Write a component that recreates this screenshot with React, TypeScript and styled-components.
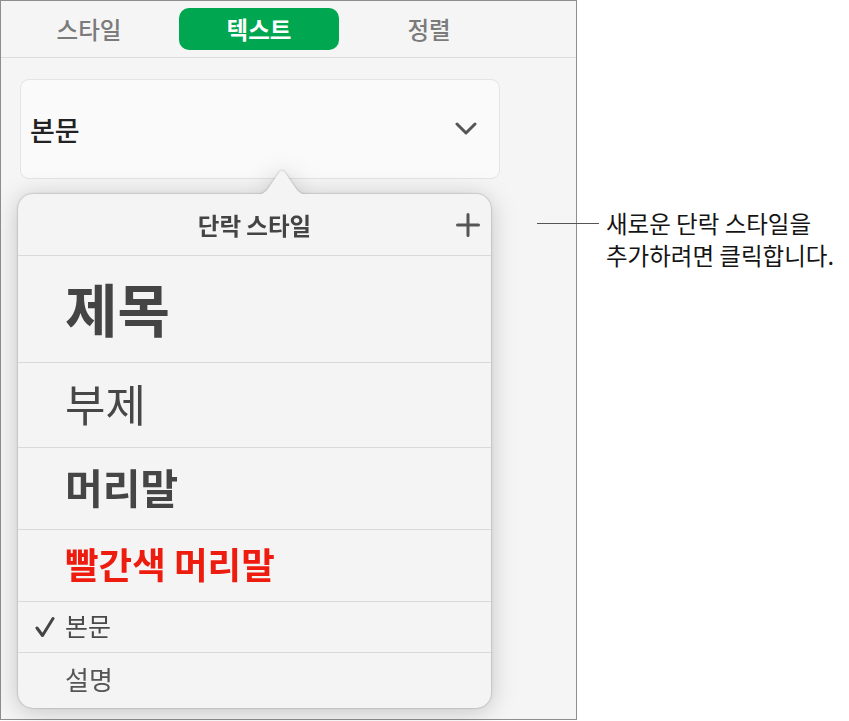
import React from 'react';
import styled, { createGlobalStyle } from 'styled-components';

const GlobalStyle = createGlobalStyle`
  html, body {
    margin: 0;
    padding: 0;
    background: #ffffff;
  }
  body {
    font-family: "Noto Sans CJK KR", "Noto Sans", sans-serif;
  }
`;

interface IStyleRow {
  label: string;
  height: number;
  size: number;
  weight: number;
  color: string;
  checked?: boolean;
}

const tabs = ['스타일', '텍스트', '정렬'];

const rows: IStyleRow[] = [
  { label: '제목', height: 107, size: 57, weight: 700, color: '#444444' },
  { label: '부제', height: 85, size: 44, weight: 400, color: '#474747' },
  { label: '머리말', height: 82, size: 41, weight: 700, color: '#454545' },
  { label: '빨간색 머리말', height: 72, size: 36.5, weight: 700, color: '#ee1c0e' },
  { label: '본문', height: 51, size: 25, weight: 400, color: '#4a4a4a', checked: true },
  { label: '설명', height: 56, size: 26, weight: 400, color: '#555555' },
];

const App: React.FC = () => (
  <>
    <GlobalStyle />
    <Page>
      <Panel>
        <TabBar>
          {tabs.map((tab) => (
            <Tab key={tab} active={tab === '텍스트'}>
              {tab}
            </Tab>
          ))}
        </TabBar>

        <StylePicker>
          <PickerText>본문</PickerText>
          <svg width="22" height="14" viewBox="0 0 22 14">
            <polyline
              points="2,2 11,11 20,2"
              fill="none"
              stroke="#555"
              strokeWidth="3"
              strokeLinecap="round"
              strokeLinejoin="round"
            />
          </svg>
        </StylePicker>

        <Popover>
          <PopoverArrow width="56" height="27" viewBox="0 0 56 27">
            <path
              d="M0 27 C7 27 10 25 13 22 L25 4.5 Q28 0.5 31 4.5 L43 22 C46 25 49 27 56 27 Z"
              fill="#f4f4f4"
            />
          </PopoverArrow>
          <Card>
            <CardHeader>
              <span />
              <HeaderTitle>단락 스타일</HeaderTitle>
              <AddButton>
                <svg width="24" height="24" viewBox="0 0 24 24">
                  <path
                    d="M12 1.5 V22.5 M1.5 12 H22.5"
                    stroke="#555"
                    strokeWidth="3"
                    strokeLinecap="round"
                  />
                </svg>
              </AddButton>
            </CardHeader>
            {rows.map((row) => (
              <StyleRow key={row.label} h={row.height}>
                <CheckSlot>
                  {row.checked && (
                    <svg width="20" height="22" viewBox="0 0 20 22">
                      <polyline
                        points="2,12 7.5,19.5 18,2.5"
                        fill="none"
                        stroke="#444"
                        strokeWidth="3"
                        strokeLinecap="round"
                        strokeLinejoin="round"
                      />
                    </svg>
                  )}
                </CheckSlot>
                <RowLabel size={row.size} weight={row.weight} color={row.color}>
                  {row.label}
                </RowLabel>
              </StyleRow>
            ))}
          </Card>
        </Popover>
      </Panel>

      <CalloutLine />
      <CalloutText>
        새로운 단락 스타일을
        <br />
        추가하려면 클릭합니다.
      </CalloutText>
    </Page>
  </>
);

const Page = styled.div`
  position: relative;
  width: 849px;
  height: 721px;
  overflow: hidden;
`;

const Panel = styled.div`
  width: 575px;
  height: 718px;
  border: 1px solid #8e8e8e;
  background: #f5f5f5;
  display: flex;
  flex-direction: column;
`;

const TabBar = styled.div`
  display: grid;
  grid-template-columns: repeat(3, 160px);
  column-gap: 10px;
  padding: 7px 8px;
  border-bottom: 1px solid #dcdcdc;
`;

const Tab = styled.div<{ active: boolean }>`
  height: 42px;
  border-radius: 10px;
  display: flex;
  align-items: center;
  justify-content: center;
  font-size: 23.5px;
  font-weight: ${({ active }) => (active ? 700 : 500)};
  color: ${({ active }) => (active ? '#ffffff' : '#7b7b7b')};
  background: ${({ active }) => (active ? '#00a650' : 'transparent')};
`;

const StylePicker = styled.div`
  margin: 21px 0 0 19px;
  width: 447px;
  height: 98px;
  border: 1px solid #e4e4e4;
  border-radius: 9px;
  background: #fafafa;
  display: flex;
  align-items: center;
  justify-content: space-between;
  padding: 0 22px 0 9px;
`;

const PickerText = styled.div`
  font-size: 27px;
  font-weight: 500;
  color: #222222;
`;

const Popover = styled.div`
  position: relative;
  margin: 15px 0 0 17px;
  width: 473px;
  filter: drop-shadow(0 0 1px rgba(0, 0, 0, 0.3)) drop-shadow(0 3px 12px rgba(0, 0, 0, 0.2));
`;

const PopoverArrow = styled.svg`
  position: absolute;
  left: 236px;
  top: -26px;
  display: block;
`;

const Card = styled.div`
  height: 514px;
  border-radius: 15px;
  background: #f4f4f4;
  overflow: hidden;
  display: flex;
  flex-direction: column;
`;

const CardHeader = styled.div`
  height: 61px;
  display: grid;
  grid-template-columns: 1fr auto 1fr;
  align-items: center;
`;

const HeaderTitle = styled.div`
  font-size: 23.5px;
  font-weight: 700;
  color: #444444;
`;

const AddButton = styled.div`
  justify-self: end;
  padding-right: 11px;
  display: flex;
  align-items: center;
`;

const StyleRow = styled.div<{ h: number }>`
  height: ${({ h }) => h - 1}px;
  border-top: 1px solid #d9d9d9;
  display: flex;
  align-items: center;
`;

const CheckSlot = styled.div`
  width: 47px;
  padding-left: 17px;
  box-sizing: border-box;
  display: flex;
  align-items: center;
`;

const RowLabel = styled.div<{ size: number; weight: number; color: string }>`
  font-size: ${({ size }) => size}px;
  font-weight: ${({ weight }) => weight};
  color: ${({ color }) => color};
  line-height: 1.2;
  white-space: nowrap;
  transform: translateY(-2px);
`;

const CalloutLine = styled.div`
  position: absolute;
  left: 537px;
  top: 223px;
  width: 62px;
  height: 1px;
  background: #555555;
`;

const CalloutText = styled.div`
  position: absolute;
  left: 606px;
  top: 207px;
  font-size: 23.5px;
  line-height: 32px;
  color: #141414;
  white-space: nowrap;
`;

export default App;
